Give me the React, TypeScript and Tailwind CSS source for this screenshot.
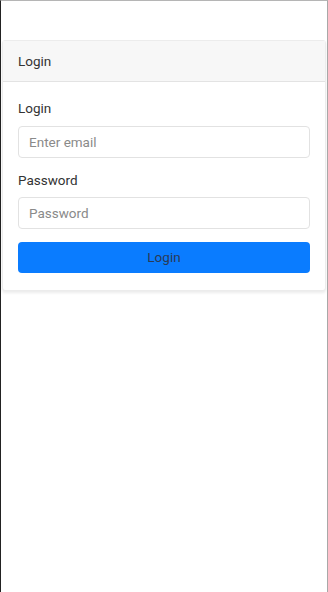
import React from "react";

export default function App() {
  return (
    <div
      className="w-[328px] h-[592px] bg-white border-l border-l-[#222] border-t border-t-[#b5b5b5] border-r border-r-[#a8a8a8] overflow-hidden"
      style={{ fontFamily: "Roboto, 'Noto Sans', sans-serif" }}
    >
      <div className="mt-[39px] ml-[1px] mr-[1px] bg-white border border-[#ececec] rounded-[3px] shadow-[0_2px_3px_rgba(0,0,0,0.08)]">
        <div className="h-[41px] bg-[#f7f7f7] border-b border-[#e3e3e3] flex items-center px-[15px] text-[13.5px] text-[#333]">
          Login
        </div>
        <div className="px-[15px] pt-[16px] pb-[17px] flex flex-col">
          <label className="text-[13.5px] leading-[20px] text-[#333] mb-[8px]">Login</label>
          <input
            type="text"
            placeholder="Enter email"
            className="h-[32px] w-full border border-[#e2e2e2] rounded-[4px] px-[10px] text-[13.5px] text-[#333] placeholder:text-[#8a8a8a] outline-none mb-[12px]"
          />
          <label className="text-[13.5px] leading-[20px] text-[#333] mb-[7px]">Password</label>
          <input
            type="password"
            placeholder="Password"
            className="h-[32px] w-full border border-[#e2e2e2] rounded-[4px] px-[10px] text-[13.5px] text-[#333] placeholder:text-[#8a8a8a] outline-none mb-[13px]"
          />
          <button className="h-[31px] w-full bg-[#0a7cff] rounded-[4px] text-[13.5px] text-[#2a3a55]">
            Login
          </button>
        </div>
      </div>
    </div>
  );
}
